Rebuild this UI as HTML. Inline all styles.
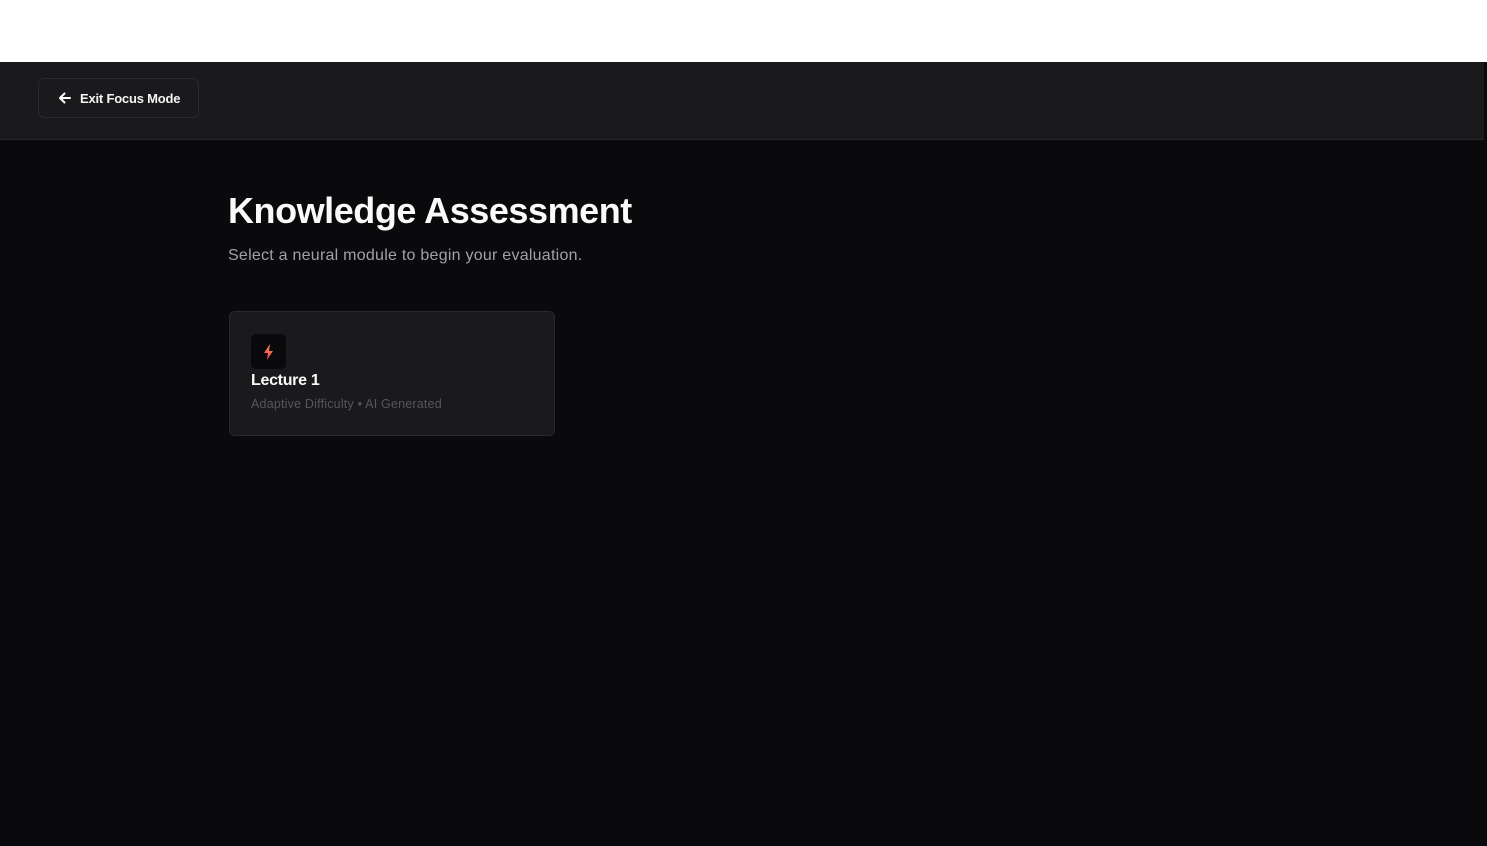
<!DOCTYPE html>
<html><head><style>
*{margin:0;padding:0;box-sizing:border-box}
body{width:1487px;height:846px;background:#fff;font-family:"Liberation Sans",sans-serif;overflow:hidden;position:relative}
.main{position:absolute;left:0;top:62px;width:1487px;height:784px;background:#0a0a0c}
.hdr{position:absolute;left:0;top:62px;width:1484px;height:78px;background:#1a1a1c;border-bottom:1px solid #27272a}
.btn{position:absolute;left:38px;top:16px;width:161px;height:40px;border:1px solid #2a2a2d;border-radius:6px;color:#f4f4f5;font-size:13px;font-weight:bold;display:flex;align-items:center;padding-left:18px;gap:7px;letter-spacing:-0.2px}
h1{position:absolute;left:228px;top:190px;color:#fafafa;font-size:36px;font-weight:bold;letter-spacing:-0.45px}
.sub{position:absolute;left:228px;top:247px;color:#a1a1aa;font-size:16px;letter-spacing:0.25px}
.card{position:absolute;left:229px;top:311px;width:326px;height:125px;background:#1a1a1c;border:1px solid #2a2a2d;border-radius:6px}
.ic{position:absolute;left:21px;top:22px;width:35px;height:35px;background:#0a0a0c;border-radius:5px;display:flex;align-items:center;justify-content:center}
.t{position:absolute;left:21px;top:60px;color:#fafafa;font-size:16px;font-weight:bold;letter-spacing:-0.3px}
.d{position:absolute;left:21px;top:85px;color:#55555b;font-size:12.5px;letter-spacing:0.2px}
</style></head><body>
<div class="main"></div>
<div class="hdr"><div class="btn"><svg width="16" height="16" viewBox="0 0 16 16" fill="none" stroke="#fff" stroke-width="2" stroke-linecap="round" stroke-linejoin="round"><path d="M13 8H3M7.5 3.5L3 8l4.5 4.5"/></svg>Exit Focus Mode</div></div>
<h1>Knowledge Assessment</h1>
<div class="sub">Select a neural module to begin your evaluation.</div>
<div class="card"><div class="ic"><svg width="12" height="18" viewBox="0 0 12 18"><defs><linearGradient id="g" x1="0" y1="0" x2="0" y2="1"><stop offset="0" stop-color="#fb923c"/><stop offset="1" stop-color="#f43f5e"/></linearGradient></defs><path d="M7 1L1 10h4l-1 7 6-9H6z" fill="url(#g)"/></svg></div>
<div class="t">Lecture 1</div><div class="d">Adaptive Difficulty • AI Generated</div></div>
</body></html>
